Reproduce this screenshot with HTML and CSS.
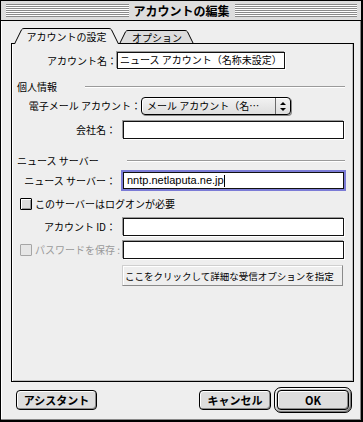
FILE: index.html
```html
<!DOCTYPE html>
<html lang="ja">
<head>
  <meta charset="UTF-8">
  <title>アカウントの編集</title>
  <link rel="stylesheet" href="styles.css">
</head>
<body>
  <div class="window">
    <div class="titlebar">
      <span class="stripes"></span>
      <span class="title">アカウントの編集</span>
      <span class="stripes"></span>
    </div>

    <div class="content">
      <div class="tabs">
        <div class="tab tab-active">
          <svg class="tab-shape" width="105" height="16" viewBox="0 0 105 16">
            <path d="M0.5,16 L7.5,1.8 Q8.3,0.5 10,0.5 L95,0.5 Q96.7,0.5 97.5,1.8 L104.5,16" fill="#eeeeee" stroke="#000"/>
          </svg>
          <span class="tab-label">アカウントの設定</span>
        </div>
        <div class="tab">
          <svg class="tab-shape" width="75" height="16" viewBox="0 0 75 16">
            <path d="M0.5,16 L6.5,3.8 Q7.3,2.5 9,2.5 L66,2.5 Q67.7,2.5 68.5,3.8 L74.5,16" fill="#dcdcdc" stroke="#000"/>
          </svg>
          <span class="tab-label tab-label-back">オプション</span>
        </div>
      </div>

      <div class="panel">
        <div class="row row-name">
          <span class="label label-name">アカウント名：</span>
          <div class="field field-name">ニュース アカウント（名称未設定）</div>
        </div>

        <div class="heading heading-first">
          <span>個人情報</span>
          <span class="rule"></span>
        </div>

        <div class="row row-popup">
          <span class="label label-mail">電子メール アカウント：</span>
          <div class="popup">
            <span class="popup-text">メール アカウント（名…</span>
            <span class="popup-arrows">
              <svg width="6" height="9" viewBox="0 0 6 9">
                <polygon points="3,0 6,3 0,3" fill="#000"/>
                <polygon points="0,6 6,6 3,9" fill="#000"/>
              </svg>
            </span>
          </div>
        </div>

        <div class="row row-company">
          <span class="label">会社名：</span>
          <div class="field"></div>
        </div>

        <div class="heading heading-news">
          <span>ニュース サーバー</span>
          <span class="rule"></span>
        </div>

        <div class="row row-news">
          <span class="label">ニュース サーバー：</span>
          <div class="field field-focus">nntp.netlaputa.ne.jp<span class="caret"></span></div>
        </div>

        <div class="row row-check">
          <span class="checkbox"></span>
          <span class="check-text">このサーバーはログオンが必要</span>
        </div>

        <div class="row row-id">
          <span class="label">アカウント ID：</span>
          <div class="field"></div>
        </div>

        <div class="row row-password">
          <span class="check-group">
            <span class="checkbox checkbox-off"></span>
            <span class="check-text check-text-off">パスワードを保存 :</span>
          </span>
          <div class="field"></div>
        </div>

        <div class="row row-options">
          <button class="bevel-button">ここをクリックして詳細な受信オプションを指定</button>
        </div>
      </div>

      <div class="buttons">
        <button class="push">アシスタント</button>
        <div class="buttons-right">
          <button class="push push-cancel">キャンセル</button>
          <div class="default-ring">
            <button class="push push-ok">OK</button>
          </div>
        </div>
      </div>
    </div>
  </div>
</body>
</html>
```

FILE: styles.css
```css
* {
  box-sizing: border-box;
}

body {
  margin: 0;
  font-family: "Noto Sans CJK JP", sans-serif;
  font-size: 10px;
  color: #000;
  background: #fff;
}

.window {
  width: 363px;
  height: 422px;
  border: 1px solid #000;
  border-right-width: 2px;
  border-bottom-width: 2px;
  background: #eeeeee;
  display: flex;
  flex-direction: column;
  box-shadow: inset -1px -1px 0 #888, inset 1px 0 0 #fff;
}

/* title bar */
.titlebar {
  height: 20px;
  flex: none;
  display: flex;
  align-items: center;
  gap: 5px;
  padding: 0 4px 0 5px;
  background: #dddddd;
  border-bottom: 1px solid #000;
}

.stripes {
  flex: 1;
  height: 13px;
  background: repeating-linear-gradient(to bottom, #8a8a8a 0 1px, #ffffff 1px 2px);
}

.title {
  font-weight: bold;
  font-size: 12px;
  line-height: 14px;
  white-space: nowrap;
}

.content {
  flex: 1;
  display: flex;
  flex-direction: column;
  padding: 7px 0 0 10px;
}

/* tabs */
.tabs {
  display: flex;
  height: 16px;
  margin-left: 3px;
}

.tab {
  display: grid;
}

.tab > * {
  grid-area: 1 / 1;
}

.tab-active {
  position: relative;
  z-index: 1;
}

.tab-shape {
  display: block;
}

.tab-label {
  justify-self: center;
  align-self: center;
  line-height: 12px;
  padding-top: 1px;
  white-space: nowrap;
}

.tab-label-back {
  padding-top: 4px;
  padding-left: 1px;
}

/* panel */
.panel {
  margin-top: -1px;
  width: 343px;
  height: 339px;
  border: 1px solid #000;
  background: #eeeeee;
  box-shadow: inset 1px 0 0 #fff, inset -1px -1px 0 #bdbdbd;
  display: flex;
  flex-direction: column;
}

.row {
  display: flex;
  align-items: center;
}

.label {
  width: 111px;
  padding-right: 7px;
  text-align: right;
  line-height: 12px;
  white-space: nowrap;
}

.label-name {
  width: 105px;
  padding-right: 0;
}

.label-mail {
  width: 129px;
  padding-right: 0;
}

.field {
  width: 221px;
  height: 18px;
  border: 1px solid #111;
  background: #fff;
  box-shadow: -1px -1px 0 #9a9a9a, 1px 1px 0 #fff;
  padding-left: 2px;
  line-height: 15px;
  white-space: nowrap;
  overflow: hidden;
}

.row-name {
  margin-top: 8px;
}

.field-name {
  width: 168px;
  height: 17px;
  line-height: 14px;
}

.heading {
  display: flex;
  align-items: center;
  height: 13px;
  padding-left: 5px;
  line-height: 12px;
  white-space: nowrap;
}

.heading-first {
  margin-top: 11px;
}

.heading-news {
  margin-top: 15px;
}

.rule {
  flex: 1;
  height: 2px;
  margin: 0 8px 0 28px;
  border-top: 1px solid #9a9a9a;
  border-bottom: 1px solid #fff;
}

/* popup menu */
.row-popup {
  margin-top: 4px;
}

.popup {
  width: 150px;
  height: 18px;
  border: 1px solid #000;
  border-radius: 4px;
  background: linear-gradient(#f2f2f2, #dedede);
  box-shadow: inset 1px 1px 0 #fff, 1px 1px 0 #8a8a8a;
  display: flex;
  align-items: center;
}

.popup-text {
  flex: 1;
  padding-left: 5px;
  line-height: 12px;
  white-space: nowrap;
}

.popup-arrows {
  width: 15px;
  height: 16px;
  border-left: 1px solid #6a6a6a;
  display: flex;
  align-items: center;
  justify-content: center;
}

.popup-arrows svg {
  display: block;
}

.row-company {
  margin-top: 6px;
}

.row-news {
  margin-top: 5px;
}

.field-focus {
  height: 17px;
  font-family: "Liberation Sans", sans-serif;
  font-size: 11px;
  line-height: 15px;
  padding-left: 3px;
  box-shadow: 0 0 0 2px #7b7bd6;
  display: flex;
  align-items: center;
}

.caret {
  width: 1px;
  height: 12px;
  background: #000;
}

/* checkboxes */
.row-check {
  margin-top: 9px;
  padding-left: 8px;
}

.checkbox {
  width: 12px;
  height: 12px;
  flex: none;
  border: 1px solid #000;
  border-radius: 1px;
  background: #dcdcdc;
  box-shadow: inset 1px 1px 0 #fff, inset -1px -1px 0 #999;
}

.checkbox-off {
  border-color: #a5a5a5;
  background: #e6e6e6;
  box-shadow: none;
}

.check-text {
  margin-left: 3px;
  line-height: 12px;
  white-space: nowrap;
}

.check-text-off {
  color: #9a9a9a;
}

.row-id {
  margin-top: 8px;
}

.row-password {
  margin-top: 5px;
}

.check-group {
  width: 111px;
  padding-left: 8px;
  display: flex;
  align-items: center;
}

.row-options {
  margin-top: 6px;
  padding-left: 110px;
}

.bevel-button {
  width: 221px;
  height: 21px;
  padding: 0 0 0 2px;
  text-align: left;
  font-family: "Noto Sans CJK JP", sans-serif;
  font-size: 9.5px;
  line-height: 12px;
  color: #000;
  background: #eeeeee;
  border: 1px solid;
  border-color: #cfcfcf #8a8a8a #8a8a8a #cfcfcf;
  box-shadow: inset 1px 1px 0 #fff;
}

/* bottom buttons */
.buttons {
  margin: 5px 0 0 5px;
  width: 336px;
  display: flex;
  align-items: center;
  justify-content: space-between;
}

.buttons-right {
  display: flex;
  align-items: center;
  gap: 3px;
}

.push {
  height: 20px;
  padding: 0;
  font-family: "Noto Sans CJK JP", sans-serif;
  font-weight: bold;
  font-size: 11px;
  line-height: 14px;
  color: #000;
  background: #dddddd;
  border: 1px solid #000;
  border-radius: 4px;
  box-shadow: inset 1px 1px 0 #fff, inset -1px -1px 0 #8a8a8a;
}

.buttons > .push {
  width: 81px;
}

.push-cancel {
  width: 72px;
}

.push-ok {
  width: 72px;
  display: block;
}

.default-ring {
  padding: 2px;
  border: 1px solid #000;
  border-radius: 7px;
  background: #c4c4c4;
  box-shadow: inset 1px 1px 0 #fff, inset -1px -1px 0 #7a7a7a;
}
```
